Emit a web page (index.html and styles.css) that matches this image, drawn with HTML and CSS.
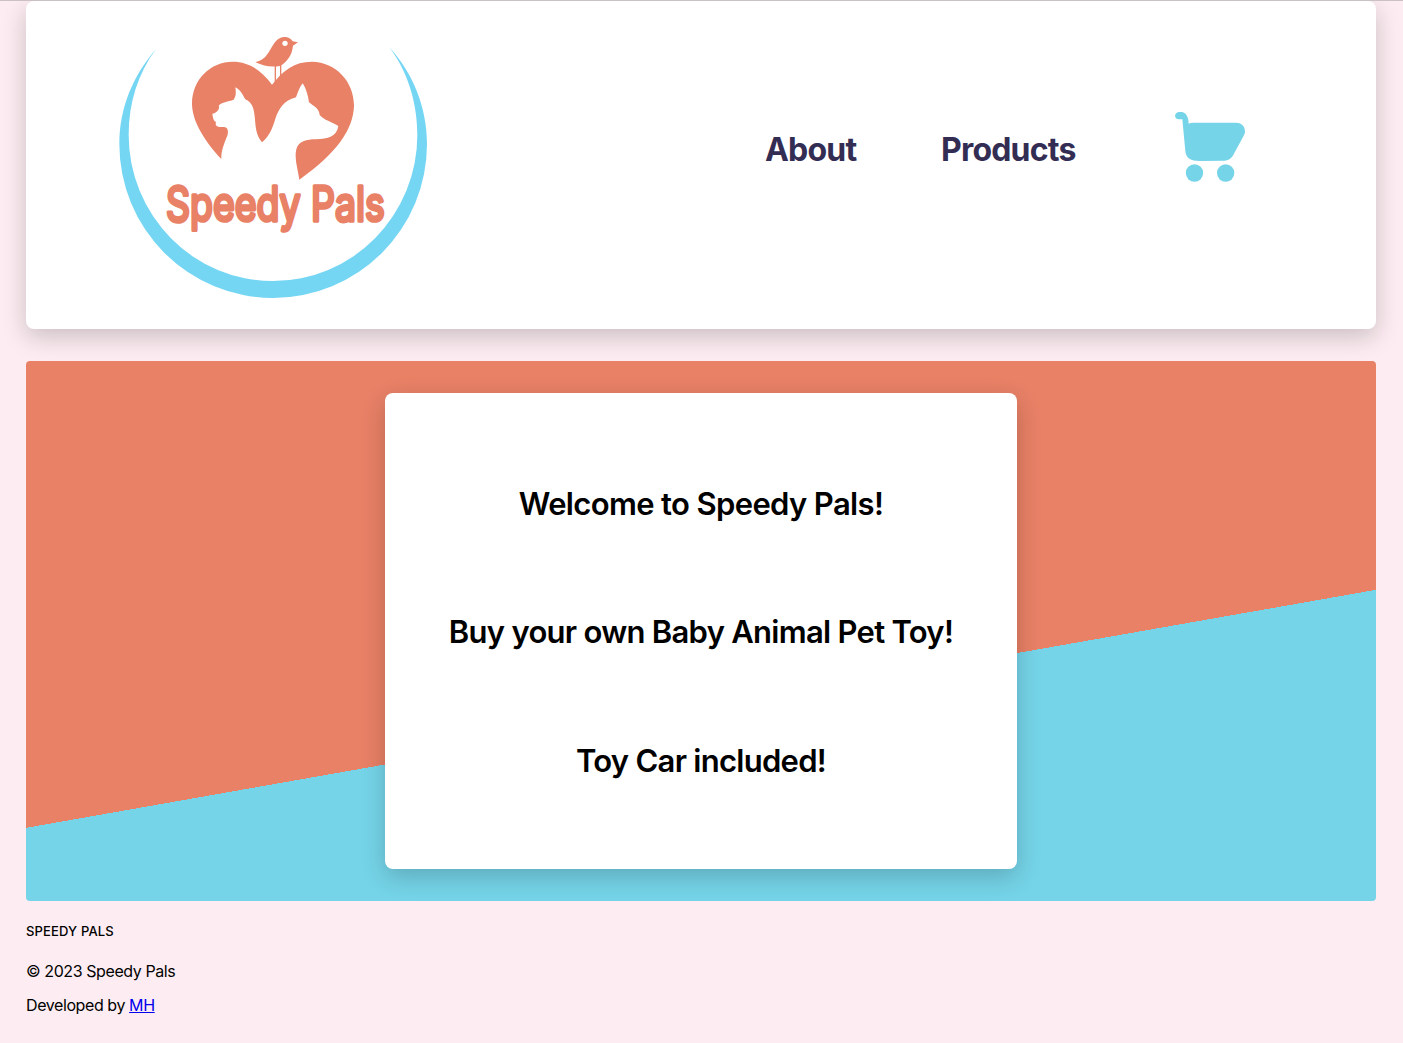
FILE: index.html
```html
<!DOCTYPE html>
<html lang="en">
<head>
<meta charset="utf-8">
<title>Speedy Pals</title>
<link rel="stylesheet" href="styles.css">
</head>
<body>
<header class="header">
  <a class="logo" aria-label="Speedy Pals">
    <svg class="logo-art" viewBox="0 0 990 870">
      <path class="ring" d="M138 87C70 166 28 262 28 372A461.500 462 0 0 0 951 372C951 262 908 158 838 82C892 152 922 248 922 345A433 438 0 0 1 489 783A433 438 0 0 1 56 345C56 248 84 160 138 87Z"/>
      <path class="coral" d="M334 417C288 368 247 308 246 252C246 178 302 125 368 125C419 125 455 153 486 194C520 151 552 125 606 125C678 127 732 184 732 257C730 329 679 400 568 479C564 449 552 415 559 388C565 363 590 358 618 358C653 357 681 350 685 318C665 305 642 301 629 285C628 264 606 256 597 247C594 226 588 205 578 190C570 200 564 215 558 232C521 241 506 268 496 296C487 326 478 348 456 367C436 344 437 317 434 289C431 262 426 248 406 238C397 223 391 209 376 202C378 215 379 226 371 239C354 245 335 246 326 257C331 267 319 281 307 281C309 295 311 302 318 306C313 322 331 322 342 321C356 322 355 337 352 347C343 369 333 391 334 417Z"/>
      <path class="coral" d="M436 127C463 121 473 103 485 82C497 60 510 50 524 51C537 51 544 58 548 64L564 67L549 77C546 105 533 123 512 137C486 143 463 139 436 127Z"/>
      <circle class="eye" cx="525" cy="70" r="8"/>
      <path class="legs" d="M496 137V185M512 133V168"/>
      <text class="word" transform="translate(168 602) scale(.785 1)">Speedy Pals</text>
    </svg>
  </a>
  <nav class="nav">
    <a class="nav-link about">About</a>
    <a class="nav-link products">Products</a>
    <a class="cart" aria-label="Cart">
      <svg class="cart-icon" viewBox="0 0 270 270">
        <path d="M41 36H49C63 37 71 51 71 71Q76 68 85 68H214C231 68 241 81 240 96C239 102 237 106 234 111L208 159C201 173 193 182 178 182L103 183C78 183 63 175 61 153L52 58H42C26 57 27 38 41 36Z"/>
        <circle cx="88.500" cy="219" r="26"/>
        <circle cx="182" cy="219" r="26"/>
      </svg>
    </a>
  </nav>
</header>
<main class="hero">
  <section class="welcome">
    <h1 class="line first">Welcome to Speedy Pals!</h1>
    <h1 class="line second">Buy your own Baby Animal Pet Toy!</h1>
    <h1 class="line third">Toy Car included!</h1>
  </section>
</main>
<footer class="footer">
  <h2 class="brand">SPEEDY PALS</h2>
  <p class="note copyright">© 2023 Speedy Pals</p>
  <p class="note credit">Developed by <a class="credit-link" href="#">MH</a></p>
</footer>
</body>
</html>
```
FILE: styles.css
```css
* { box-sizing: border-box; }
body {
  margin: 0;
  min-height: 1043px;
  padding: 0 27px 0 26px;
  border-top: 1px solid #c9c1c5;
  background: #fdedf2;
  color: #000;
  font-family: Inter, "Liberation Sans", sans-serif;
}
.header {
  display: flex;
  justify-content: space-between;
  height: 328px;
  padding: 19px 121px 0 84px;
  border-radius: 8px;
  background: #fff;
  box-shadow: 0 8px 24px rgba(0, 0, 0, .2);
}
.logo { width: 330px; height: 290px; }
.logo-art { display: block; width: 330px; height: 290px; }
.ring { fill: #75d6f4; }
.coral { fill: #e88166; }
.eye { fill: #fff; }
.legs { fill: none; stroke: #e88166; stroke-width: 4; }
.word {
  fill: #e88166;
  stroke: #e88166;
  stroke-width: 11;
  stroke-linejoin: round;
  font-size: 143px;
  font-weight: 400;
}
.nav {
  display: flex;
  align-items: center;
  height: 90px;
  margin-top: 80px;
}
.nav-link {
  padding-top: 10px;
  color: #332d54;
  font-size: 32px;
  font-weight: 700;
  line-height: 40px;
  white-space: nowrap;
}
.about { width: 175px; letter-spacing: -.8px; }
.products { width: 225px; padding-left: 1px; letter-spacing: -.8px; }
.cart, .cart-icon { display: block; width: 90px; height: 90px; }
.cart-icon { fill: #75d4e8; }
.hero {
  display: flex;
  justify-content: center;
  height: 540px;
  margin-top: 32px;
  padding: 32px;
  border-radius: 4px;
  background: linear-gradient(170deg, #e88166 60%, #75d4e8 60%);
}
.welcome {
  display: flex;
  flex-direction: column;
  align-items: center;
  gap: 88.400px;
  width: 632px;
  padding-top: 91px;
  border-radius: 8px;
  background: #fff;
  box-shadow: 0 8px 24px rgba(0, 0, 0, .2);
}
.line {
  margin: 0;
  font-size: 31px;
  font-weight: 600;
  line-height: 40px;
  letter-spacing: -.72px;
  white-space: nowrap;
}
.first { letter-spacing: -.64px; }
.footer { padding-top: 20px; }
.brand {
  margin: 0;
  font-size: 13px;
  font-weight: 500;
  line-height: 20px;
  letter-spacing: .15px;
}
.note { margin: 0; font-size: 16px; line-height: 20px; letter-spacing: -.41px; }
.copyright { margin-top: 20px; }
.credit { margin-top: 14px; }
.credit-link { color: #0000ee; }
```
